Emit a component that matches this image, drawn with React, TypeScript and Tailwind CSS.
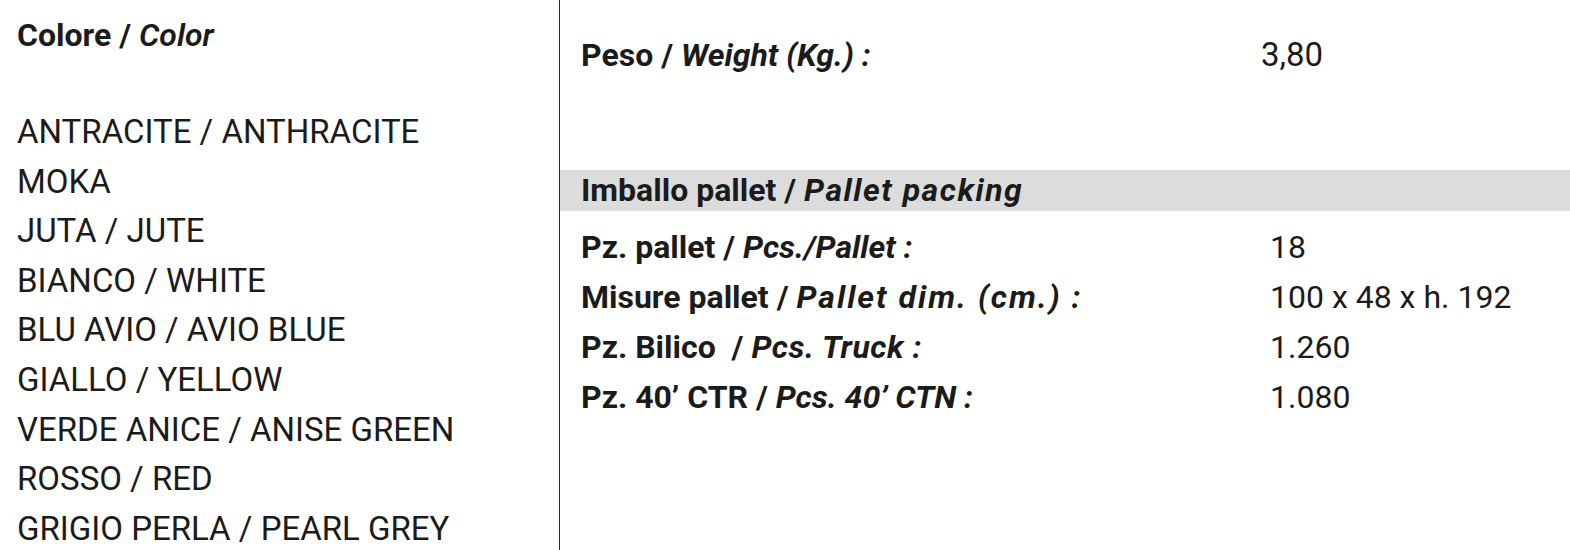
import React from "react";

const colors = [
  "ANTRACITE / ANTHRACITE",
  "MOKA",
  "JUTA / JUTE",
  "BIANCO / WHITE",
  "BLU AVIO / AVIO BLUE",
  "GIALLO / YELLOW",
  "VERDE ANICE / ANISE GREEN",
  "ROSSO / RED",
  "GRIGIO PERLA / PEARL GREY",
];

const rows: { it: string; en: string; value: string; enClass: string }[] = [
  { it: "Pz. pallet / ", en: "Pcs./Pallet :", value: "18", enClass: "" },
  { it: "Misure pallet / ", en: "Pallet dim. (cm.) :", value: "100 x 48 x h. 192", enClass: "tracking-[2px]" },
  { it: "Pz. Bilico  / ", en: "Pcs. Truck :", value: "1.260", enClass: "tracking-[0.5px]" },
  { it: "Pz. 40\u2019 CTR / ", en: "Pcs. 40\u2019 CTN :", value: "1.080", enClass: "" },
];

export default function App() {
  return (
    <div
      className="flex w-[1570px] h-[550px] overflow-hidden bg-white text-[#1b1b1b]"
      style={{ fontFamily: "Roboto, 'Liberation Sans', sans-serif" }}
    >
      <div className="w-[560px] shrink-0 border-r border-[#2a2a2a] pl-[17px] pt-[10px]">
        <div className="text-[32px] leading-[50px] font-bold whitespace-pre">
          Colore / <span className="italic font-semibold">Color</span>
        </div>
        <ul className="mt-[47px]">
          {colors.map((c) => (
            <li key={c} className="text-[33px] leading-[49.6px] whitespace-pre">
              {c}
            </li>
          ))}
        </ul>
      </div>
      <div className="flex-1 pt-[30px]">
        <div className="flex pl-[21px] text-[32px] leading-[50px]">
          <div className="w-[680px] shrink-0 font-bold whitespace-pre">
            Peso / <span className="italic">Weight (Kg.) :</span>
          </div>
          <div className="text-[33px]">3,80</div>
        </div>
        <div className="mt-[90px] h-[41px] bg-[#dcdcdd] pl-[21px] text-[32px] leading-[41px] font-bold whitespace-pre">
          Imballo pallet / <span className="italic tracking-[1.5px]">Pallet packing</span>
        </div>
        <div className="mt-[11px] pl-[21px]">
          {rows.map((r) => (
            <div key={r.value} className="flex text-[32px] leading-[50px]">
              <div className="w-[689px] shrink-0 font-bold whitespace-pre">
                {r.it}
                <span className={`italic ${r.enClass}`}>{r.en}</span>
              </div>
              <div className="text-[32px] whitespace-pre">{r.value}</div>
            </div>
          ))}
        </div>
      </div>
    </div>
  );
}
